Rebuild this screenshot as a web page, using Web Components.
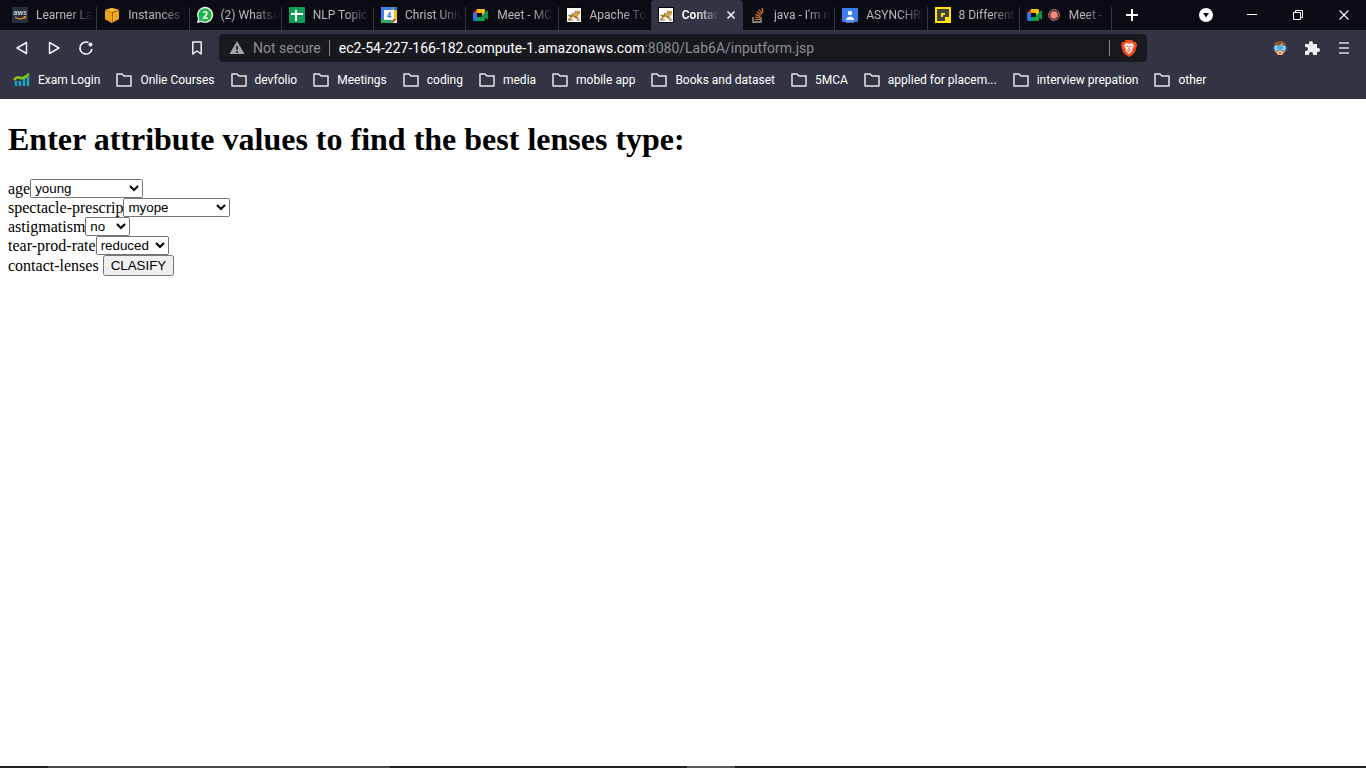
<!DOCTYPE html>
<html lang="en">
<head>
<meta charset="utf-8">
<title>Contact lenses</title>
<style>
html, body { margin: 0; background: #fff; }
</style>
</head>
<body>
<browser-window></browser-window>
<script>
const ICONS = {
  aws: '<rect width="16" height="16" fill="#252f3e"/><text x="8" y="8" text-anchor="middle" font-size="7" font-weight="700" font-family="Open Sans, sans-serif" fill="#c9ccd0">aws</text><path d="M3 10q5 3.600 10 .6M11.500 9.800l2-.2-.3 1.800" fill="none" stroke="#e69a25" stroke-width="1.200"/>',
  cube: '<path d="M1 3l7-2 7 2v9l-7 4-7-4z" fill="#f5a81c"/><path d="M1 3l7 2.500L15 3M8 5.500V16" stroke="#5a3608" stroke-width="1" fill="none"/><path d="M1 3l7-2 7 2-7 2z" fill="#ffb62d"/><path d="M8 5.500V16l-7-4V3.500z" fill="#eda321"/>',
  whatsapp: '<path d="M0 16l1-4.500A8 8 0 1 1 4.500 15z" fill="#fff"/><circle cx="8" cy="8" r="6.700" fill="#18b84b"/><path d="M1.500 14.500l1-3 2 2z" fill="#18b84b"/><text x="8" y="12" text-anchor="middle" font-size="10" font-weight="700" font-family="Open Sans, sans-serif" fill="#fff">2</text>',
  sheets: '<rect width="16" height="16" rx="1" fill="#109d58"/><path d="M7 3v11M2 7h12" stroke="#fff" stroke-width="2"/>',
  calendar: '<rect width="16" height="16" rx="1" fill="#fff"/><path d="M1 0h11v3H3v9H0V1z" fill="#3f7ff0"/><path d="M12 0h3l1 1v11h-3V3h-1z" fill="#fbbc04"/><path d="M0 12h3v1h9v3H1l-1-1z" fill="#35a753"/><path d="M13 0h2l1 1v2h-3z" fill="#176de0"/><path d="M12 12h4l-4 4z" fill="#ea4335"/><text x="8" y="11" text-anchor="middle" font-size="8" font-weight="700" font-family="Open Sans, sans-serif" fill="#3478e5">4</text>',
  meet: '<path d="M0 6l4-4v4z" fill="#ea4335"/><path d="M4 2h7q1 0 1 1v4l-3 2V6H4z" fill="#fbbc04"/><path d="M0 6h4v8H1l-1-1z" fill="#2578ee"/><path d="M4 10h5V8l3-1v6q0 1-1 1H4z" fill="#16a148"/><path d="M11 6l4-3v10l-4-3z" fill="#129149"/>',
  tomcat: '<rect x=".5" y=".5" width="15" height="15" fill="#fff" stroke="#050505"/><path d="M2 12c2-2 2-4 4-5l3-1 1-3 1 1h2l1-1v4l-2 2 1 4-3-1-2-2-2 1-2 2H2z" fill="#d5a14b"/><path d="M2 9l3-1M9 4l1 2M12 5v1M4 10l3-2M8 9l3 2M2 13h5M11 13h3M6 6l2 1" stroke="#594521" stroke-width=".8"/>',
  stack: '<path d="M3 10v5h8v-5" stroke="#aaa5a1" stroke-width="1.300" fill="none"/><path d="M5 12.500h5M5 10l5 1M5.500 7.400l4.800 2.200M7 4.500l4 3.600M9 2.500l3 4.500M12 1l1 5" stroke="#ef7b22" stroke-width="1.200"/>',
  contact: '<rect y="1" width="16" height="14" rx="1" fill="#3b7deb"/><path d="M4 13v-1q1-2.500 4-2.500T12 12v1z" fill="#fff"/><circle cx="8" cy="6" r="2.200" fill="#fff"/><path d="M4 15h8" stroke="#a4c5ff"/>',
  square: '<path d="M0 0h16v16H0z" fill="#ffe500"/><path d="M2 2h12v8h-4v4H2z" fill="#3f4144"/><path d="M6 6h4v4H6z" fill="#ffe500"/><path d="M8 8h2v2H8z" fill="#3f4144"/>',
  record: '<circle cx="6" cy="8" r="5.300" fill="none" stroke="#e9857d" stroke-width="1"/><circle cx="6" cy="8" r="3.800" fill="#f28b82"/>',
  close: '<path d="M4.500 4.500l7 7m0-7l-7 7" stroke="#eee" stroke-width="1.700"/>',
  plus: '<path d="M8 2v12M2 8h12" stroke="#fff" stroke-width="2"/>',
  down: '<circle cx="8" cy="8" r="7" fill="#fff"/><path d="M5 6h6l-3 4.500z" fill="#0c0c15"/>',
  minimize: '<path d="M3 7.500h10" stroke="#fff"/>',
  restore: '<path d="M3.500 5.500h7v7h-7zM5.500 5V3.500h7v7H11" fill="none" stroke="#fff"/>',
  exit: '<path d="M3.500 3.500l9 9m0-9l-9 9" stroke="#fff" stroke-width="1.100"/>',
  back: '<path d="M12.500 2.500v11L3 8z" fill="none" stroke="#f0f0f2" stroke-width="1.500" stroke-linejoin="round"/>',
  forward: '<path d="M3.500 2.500v11L13 8z" fill="none" stroke="#f0f0f2" stroke-width="1.500" stroke-linejoin="round"/>',
  reload: '<path d="M10.500 2.600A6 6 0 1 0 13.900 9" fill="none" stroke="#f0f0f2" stroke-width="1.600"/><circle cx="12.500" cy="4.500" r="2" fill="#f0f0f2"/>',
  bookmark: '<path d="M3.800 2h8.400v12L8 11l-4.200 3z" fill="none" stroke="#f0f0f2" stroke-width="1.500" stroke-linejoin="round"/>',
  warning: '<path d="M8 1l7.500 13H.5z" fill="#a0a4ab"/><path d="M8 6v4M8 11v2" stroke="#17191f" stroke-width="1.600"/>',
  brave: '<path d="M3 2l2-2h6l2 2h2l1 3-2 7q-1 2-6 5-5-3-6-5L0 5l1-3z" fill="#f34c1b"/><path d="M5 3l3 .7L11 3l2 3-2 3 .5 1.500L8 14l-3.500-3.500L5 9 3 6z" fill="#fff"/><path d="M4.500 6l2.500.7m4.500-.7L9 6.700M6.300 10L8 9l1.700 1L8 12zM8 6v3" fill="none" stroke="#f34c1b" stroke-width=".9"/>',
  face: '<path d="M2 11V5q1-4 6-4t6 4v6l-3 3H5z" fill="#8b5a24"/><path d="M3 7q5-1 7-4 1 3 3 4v4l-3 4H6l-3-4z" fill="#efb28c"/><circle cx="4.700" cy="8" r="2.600" fill="#e9f8ff" stroke="#259ae1" stroke-width="1.300"/><circle cx="11.300" cy="8" r="2.600" fill="#e9f8ff" stroke="#259ae1" stroke-width="1.300"/><circle cx="5" cy="8" r="1" fill="#26699b"/><circle cx="11" cy="8" r="1" fill="#26699b"/><path d="M7 13h2" stroke="#ad5340"/>',
  puzzle: '<path d="M1 4h4V3a2 2 0 0 1 4 0v1h4v4h1a2 2 0 0 1 0 4h-1v3H9v-1a2 2 0 0 0-4 0v1H1v-4h1a2 2 0 0 0 0-4H1z" fill="#eeeef0"/>',
  menu: '<path d="M3 3h10M3 8h10M3 13h10" stroke="#d7d8dc" stroke-width="1.700"/>',
  chart: '<path d="M2 9v5M6 9v5M10 7v7M14 5v9" stroke="#16a7c8" stroke-width="2.400"/><path d="M0 8q3-4 6-2 4 1 9-4" fill="none" stroke="#80c51c" stroke-width="2.600"/>',
  folder: '<path d="M1 2h5l2 2h7v10H1z" fill="none" stroke="#e4e5e9" stroke-width="1.500" stroke-linejoin="round"/>'
};

class UiIcon extends HTMLElement {
  connectedCallback() {
    if (this.shadowRoot) return;
    this.attachShadow({mode: 'open'}).innerHTML = `
      <style>:host { display: block; width: 16px; height: 16px; flex: none; } svg { display: block; width: 16px; height: 16px; overflow: visible; }</style>
      <svg viewBox="0 0 16 16" aria-hidden="true">${ICONS[this.getAttribute('name')]}</svg>`;
  }
}
customElements.define('ui-icon', UiIcon);

class BrowserTab extends HTMLElement {
  connectedCallback() {
    if (this.shadowRoot) return;
    const active = this.hasAttribute('active');
    const recording = this.hasAttribute('recording');
    this.attachShadow({mode: 'open'}).innerHTML = `
      <style>
        :host { display: flex; align-items: center; flex: 1 1 0; min-width: 0; height: 30px; box-sizing: border-box; padding: 0 4px 0 7px; position: relative; }
        :host(:not([active]))::after { content: ""; position: absolute; right: 0; top: 7px; bottom: 0; width: 1px; background: #35363e; }
        :host([beside])::after { display: none; }
        :host([active]) { background: #323443; border-radius: 4px 4px 0 0; }
        button { font: inherit; color: inherit; background: none; border: 0; padding: 0; }
        .tab { display: flex; align-items: center; gap: 8px; flex: 1; min-width: 0; text-align: left; color: #b9b9bd; height: 30px; }
        .recording { gap: 5px; }
        span { flex: 1; min-width: 0; overflow: hidden; white-space: nowrap; line-height: 20px; -webkit-mask-image: linear-gradient(to left, transparent, #000 24px); mask-image: linear-gradient(to left, transparent, #000 24px); }
        :host([active]) span { color: #fff; font-weight: 600; }
        .close { flex: none; margin-left: 4px; }
      </style>
      <button class="tab ${recording ? 'recording' : ''}"><ui-icon name="${this.getAttribute('icon')}"></ui-icon>${recording ? '<ui-icon name="record"></ui-icon>' : ''}<span><slot></slot></span></button>
      ${active ? '<button class="close" aria-label="Close tab"><ui-icon name="close"></ui-icon></button>' : ''}`;
  }
}
customElements.define('browser-tab', BrowserTab);

class TabStrip extends HTMLElement {
  constructor() {
    super();
    this.attachShadow({mode: 'open'}).innerHTML = `
      <style>
        :host { display: flex; height: 30px; background: #0b0b14; padding-left: 5px; }
        .tabs { display: flex; flex: 1; min-width: 0; }
        .controls { display: flex; flex: none; align-items: center; padding-right: 14px; }
        .window { display: flex; gap: 30px; padding-left: 58px; }
        .controls > button { margin-left: 12px; }
        button { display: block; border: 0; padding: 0; background: none; }
      </style>
      <div class="tabs">
        <browser-tab icon="aws">Learner Lab</browser-tab>
        <browser-tab icon="cube">Instances |</browser-tab>
        <browser-tab icon="whatsapp">(2) WhatsA</browser-tab>
        <browser-tab icon="sheets">NLP Topic -</browser-tab>
        <browser-tab icon="calendar">Christ Univ</browser-tab>
        <browser-tab icon="meet">Meet - MC</browser-tab>
        <browser-tab icon="tomcat" beside>Apache To</browser-tab>
        <browser-tab icon="tomcat" active>Contac</browser-tab>
        <browser-tab icon="stack">java - I'm n</browser-tab>
        <browser-tab icon="contact">ASYNCHRO</browser-tab>
        <browser-tab icon="square">8 Different</browser-tab>
        <browser-tab icon="meet" recording>Meet -</browser-tab>
      </div>
      <div class="controls">
        <button aria-label="New tab"><ui-icon name="plus"></ui-icon></button>
        <div class="window">
          <button aria-label="Search tabs"><ui-icon name="down"></ui-icon></button>
          <button aria-label="Minimize"><ui-icon name="minimize"></ui-icon></button>
          <button aria-label="Restore"><ui-icon name="restore"></ui-icon></button>
          <button aria-label="Close"><ui-icon name="exit"></ui-icon></button>
        </div>
      </div>`;
  }
}
customElements.define('tab-strip', TabStrip);

class AddressBar extends HTMLElement {
  constructor() {
    super();
    this.attachShadow({mode: 'open'}).innerHTML = `
      <style>
        :host { display: flex; align-items: center; height: 36px; font-size: 14px; }
        button { display: block; border: 0; padding: 0; background: none; }
        .side { display: flex; align-items: center; box-sizing: border-box; width: 219px; gap: 16px; }
        .left { padding: 0 14px; }
        .left button:last-child { margin-left: auto; }
        .right { justify-content: flex-end; padding-right: 14px; }
        .address { display: flex; align-items: center; flex: 1; min-width: 0; height: 28px; box-sizing: border-box; padding: 0 10px; background: #17191f; border-radius: 4px; color: #8b8e94; white-space: nowrap; line-height: 20px; }
        .status { padding: 0 8px; }
        .rule { width: 1px; height: 16px; background: #85878d; }
        .url { flex: 1; min-width: 0; overflow: hidden; padding-left: 9px; }
        .url b { color: #fff; font-weight: 400; }
        .address button { margin-left: 11px; }
      </style>
      <div class="side left">
        <button aria-label="Back"><ui-icon name="back"></ui-icon></button>
        <button aria-label="Forward"><ui-icon name="forward"></ui-icon></button>
        <button aria-label="Reload"><ui-icon name="reload"></ui-icon></button>
        <button aria-label="Bookmark"><ui-icon name="bookmark"></ui-icon></button>
      </div>
      <div class="address">
        <ui-icon name="warning"></ui-icon><span class="status">Not secure</span><span class="rule"></span>
        <span class="url"><b>ec2-54-227-166-182.compute-1.amazonaws.com</b>:8080/Lab6A/inputform.jsp</span>
        <span class="rule"></span><button aria-label="Brave Shields"><ui-icon name="brave"></ui-icon></button>
      </div>
      <div class="side right">
        <button aria-label="Profile extension"><ui-icon name="face"></ui-icon></button>
        <button aria-label="Extensions"><ui-icon name="puzzle"></ui-icon></button>
        <button aria-label="Menu"><ui-icon name="menu"></ui-icon></button>
      </div>`;
  }
}
customElements.define('address-bar', AddressBar);

class BookmarkLink extends HTMLElement {
  connectedCallback() {
    if (this.shadowRoot) return;
    this.attachShadow({mode: 'open'}).innerHTML = `
      <style>
        :host { display: block; flex: none; }
        a { display: flex; align-items: center; gap: 8px; color: #fff; text-decoration: none; white-space: nowrap; line-height: 20px; }
      </style>
      <a href="#"><ui-icon name="${this.getAttribute('icon') || 'folder'}"></ui-icon><span><slot></slot></span></a>`;
  }
}
customElements.define('bookmark-link', BookmarkLink);

class BookmarkBar extends HTMLElement {
  constructor() {
    super();
    this.attachShadow({mode: 'open'}).innerHTML = `
      <style>:host { display: flex; align-items: center; gap: 16px; height: 28px; padding: 0 14px 5px; overflow: hidden; }</style>
      <bookmark-link icon="chart">Exam Login</bookmark-link>
      <bookmark-link>Onlie Courses</bookmark-link>
      <bookmark-link>devfolio</bookmark-link>
      <bookmark-link>Meetings</bookmark-link>
      <bookmark-link>coding</bookmark-link>
      <bookmark-link>media</bookmark-link>
      <bookmark-link>mobile app</bookmark-link>
      <bookmark-link>Books and dataset</bookmark-link>
      <bookmark-link>5MCA</bookmark-link>
      <bookmark-link>applied for placem...</bookmark-link>
      <bookmark-link>interview prepation</bookmark-link>
      <bookmark-link>other</bookmark-link>`;
  }
}
customElements.define('bookmark-bar', BookmarkBar);

class LensForm extends HTMLElement {
  constructor() {
    super();
    this.attachShadow({mode: 'open'}).innerHTML = `
      <style>
        :host { display: block; padding: 0 8px; color: #000; font: 16px "Liberation Serif", "Times New Roman", serif; }
        h1 { margin: 0; padding: 21px 0; font-size: 32px; line-height: 38px; }
        .row { display: flex; align-items: center; line-height: 19px; }
        select, button { font-family: "Liberation Sans", Arial, sans-serif; color: #000; }
        select { height: 19px; padding-right: 2px; }
        button { height: 21px; margin-left: 4px; }
      </style>
      <h1>Enter attribute values to find the best lenses type:</h1>
      <form>
        <div class="row"><label for="age">age</label><select id="age"><option>young</option><option>pre-presbyopic</option><option>presbyopic</option></select></div>
        <div class="row"><label for="prescrip">spectacle-prescrip</label><select id="prescrip"><option>myope</option><option>hypermetrope</option></select></div>
        <div class="row"><label for="astigmatism">astigmatism</label><select id="astigmatism"><option>no</option><option>yes</option></select></div>
        <div class="row"><label for="tear">tear-prod-rate</label><select id="tear"><option>reduced</option><option>normal</option></select></div>
        <div class="row"><span>contact-lenses</span><button type="button">CLASIFY</button></div>
      </form>`;
  }
}
customElements.define('lens-form', LensForm);

class BrowserWindow extends HTMLElement {
  constructor() {
    super();
    this.attachShadow({mode: 'open'}).innerHTML = `
      <style>
        :host { display: flex; flex-direction: column; min-height: 100vh; font: 12px "Segoe UI", Roboto, sans-serif; }
        header { background: #323443; }
        main { flex: 1; background: #fff; }
        footer { display: flex; height: 2px; background: #202124; }
        .open { flex: 0 0 25%; margin-left: 48px; background: #494a4c; }
        .app { flex: 0 0 48px; margin-left: auto; margin-right: 631px; background: #58595b; }
      </style>
      <header><tab-strip></tab-strip><address-bar></address-bar><bookmark-bar></bookmark-bar></header>
      <main><lens-form></lens-form></main>
      <footer><div class="open"></div><div class="app"></div></footer>`;
  }
}
customElements.define('browser-window', BrowserWindow);
</script>
</body>
</html>
